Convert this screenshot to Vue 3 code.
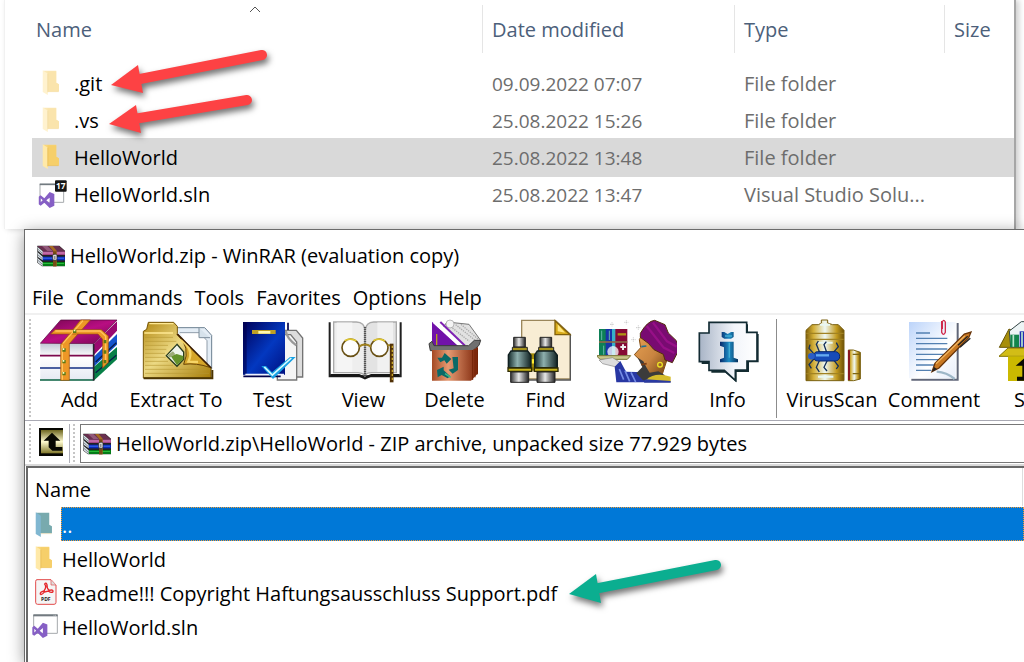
<script setup>
const files = [
  { name: '.git', date: '09.09.2022 07:07', type: 'File folder', icon: 'hidden' },
  { name: '.vs', date: '25.08.2022 15:26', type: 'File folder', icon: 'hidden' },
  { name: 'HelloWorld', date: '25.08.2022 13:48', type: 'File folder', icon: 'folder', selected: true },
  { name: 'HelloWorld.sln', date: '25.08.2022 13:47', type: 'Visual Studio Solu...', icon: 'sln' },
]
const menus = ['File', 'Commands', 'Tools', 'Favorites', 'Options', 'Help']
const entries = [
  { name: '..', icon: 'up', selected: true },
  { name: 'HelloWorld', icon: 'folder' },
  { name: 'Readme!!! Copyright Haftungsausschluss Support.pdf', icon: 'pdf' },
  { name: 'HelloWorld.sln', icon: 'sln' },
]
const address = 'HelloWorld.zip\\HelloWorld - ZIP archive, unpacked size 77.929 bytes'
</script>

<template>
  <div class="screen">
    <svg width="0" height="0" class="defs" aria-hidden="true">
      <defs>
        <linearGradient id="gold" x1="0" y1="0" x2="1" y2="1"><stop offset="0" stop-color="#b48a14" /><stop offset=".45" stop-color="#ecd983" /><stop offset="1" stop-color="#a67c08" /></linearGradient>
        <linearGradient id="goldH"><stop offset="0" stop-color="#80600a" /><stop offset=".2" stop-color="#d4b038" /><stop offset=".5" stop-color="#eef8f4" /><stop offset=".8" stop-color="#c49c20" /><stop offset="1" stop-color="#6e5206" /></linearGradient>
        <linearGradient id="page" x1="0" y1="0" x2="1" y2="1"><stop offset="0" stop-color="#bcd4fa" /><stop offset=".6" stop-color="#fff" /><stop offset="1" stop-color="#e8eefa" /></linearGradient>
        <linearGradient id="blueBook" x1="0" y1="0" x2="1" y2="1"><stop offset="0" stop-color="#000058" /><stop offset=".55" stop-color="#0338c0" /><stop offset="1" stop-color="#001080" /></linearGradient>
        <linearGradient id="copper"><stop offset="0" stop-color="#a44a24" /><stop offset=".35" stop-color="#e69a72" /><stop offset="1" stop-color="#7c2408" /></linearGradient>
        <linearGradient id="metal"><stop offset="0" stop-color="#333" /><stop offset=".45" stop-color="#e8e8e8" /><stop offset="1" stop-color="#222" /></linearGradient>
        <linearGradient id="tealTube"><stop offset="0" stop-color="#142a2a" /><stop offset=".4" stop-color="#8eb0ae" /><stop offset="1" stop-color="#112222" /></linearGradient>
        <linearGradient id="silver"><stop offset="0" stop-color="#a8b4c6" /><stop offset=".6" stop-color="#f2f5fa" /><stop offset="1" stop-color="#fff" /></linearGradient>
        <linearGradient id="infoBlue"><stop offset="0" stop-color="#06286a" /><stop offset=".5" stop-color="#1e8cc4" /><stop offset="1" stop-color="#06305c" /></linearGradient>
        <linearGradient id="paper" x1="0" y1="0" x2="0" y2="1"><stop offset="0" stop-color="#c4cad6" /><stop offset=".35" stop-color="#fff" /><stop offset="1" stop-color="#e6eaf2" /></linearGradient>
        <linearGradient id="magenta" x1="0" y1="0" x2="1" y2="1"><stop offset="0" stop-color="#74064e" /><stop offset=".5" stop-color="#b80e82" /><stop offset="1" stop-color="#720650" /></linearGradient>
        <linearGradient id="skin" x1="0" y1="0" x2="1" y2="1"><stop offset="0" stop-color="#e6a052" /><stop offset=".5" stop-color="#c88440" /><stop offset="1" stop-color="#5e3608" /></linearGradient>
        <linearGradient id="upGold" x1="0" y1="0" x2="0" y2="1"><stop offset="0" stop-color="#6d6620" /><stop offset=".5" stop-color="#fffbd0" /><stop offset="1" stop-color="#80772a" /></linearGradient>
        <symbol id="books" viewBox="48 58 90 66">
          <path d="M52 60H118L135 75V122H66L52 111Z" fill="#222" />
          <path d="M52 61H117L134 76H68Z" fill="#68304f" /><path d="M66 61H82L98 76H82Z" fill="#92587a" />
          <path d="M67 77H135V88H67Z" fill="#a44685" /><path d="M69 80H134V84H69Z" fill="#cf7db6" />
          <path d="M67 93H135V104H67Z" fill="#0828b8" /><path d="M69 96H132V99H69Z" fill="#3e70f2" />
          <path d="M67 109H135V121H67Z" fill="#047c18" /><path d="M69 112H132V115H69Z" fill="#28bb38" />
          <path d="M52 63L68 77V87L54 76ZM52 79L68 93V104L54 94ZM52 96L68 110V122L54 111Z" fill="#d8e0e6" />
          <path d="M53 70L67 83M53 87L67 99M53 103L67 116" stroke="#5b606b" stroke-width="2" />
          <path d="M87 61H98L110 75V122H100V76Z" fill="#a66b20" /><path d="M99 77H109V122H99Z" fill="#754b14" />
          <rect x="98" y="86" width="13" height="18" rx="4" fill="#ddd" stroke="#222" stroke-width="2" /><rect x="103" y="91" width="3" height="10" fill="#666" />
        </symbol>
        <symbol id="folder" viewBox="0 0 50 74">
          <path d="M3 2H42V38L50 42V64H14L3 60Z" fill="#f9d77c" /><path d="M16 4H42V38L50 42V63H16Z" fill="#f6cf6a" /><path d="M2 1L17 11V74L2 65Z" fill="#ffe9a8" /><path d="M17 11V66" stroke="#e5b74b" stroke-width="2" /><path d="M17 64H49" stroke="#edbd50" stroke-width="2" />
        </symbol>
        <symbol id="vs" viewBox="0 0 50 50">
          <path d="M34 1L48 7V42L34 49L18 33L7 42L1 38V15L7 11L18 20ZM34 18L24 26L34 35ZM7 20V32L13 26Z" fill="#865fc5" fill-rule="evenodd" />
        </symbol>
      </defs>
    </svg>

    <section class="explorer">
      <table class="files">
        <colgroup><col /><col class="c-date" /><col class="c-type" /><col class="c-size" /></colgroup>
        <thead>
          <tr>
            <th class="first">Name<svg class="caret" width="12" height="7" viewBox="0 0 12 7"><path d="M1 6L6 1L11 6" fill="none" stroke="#555" /></svg></th>
            <th>Date modified</th><th>Type</th><th>Size</th>
          </tr>
        </thead>
        <tbody>
          <tr v-for="f in files" :key="f.name" :class="{ selected: f.selected }">
            <td class="first">
              <div class="file">
                <span class="slot">
                  <svg v-if="f.icon === 'sln'" width="29" height="29" viewBox="0 0 87 87">
                    <path d="M6 13H77V67H6Z" fill="#fff" stroke="#a5a9ac" stroke-width="3" /><path d="M5 13H55" stroke="#727a80" stroke-width="5" />
                    <use href="#vs" x="1" y="35" width="50" height="50" />
                    <rect x="51" y="1" width="35" height="34" rx="3" fill="#161616" /><text x="54" y="26" class="badge">17</text>
                  </svg>
                  <svg v-else class="tree" :class="{ faded: f.icon === 'hidden' }" width="17" height="25"><use href="#folder" width="17" height="25" /></svg>
                </span>{{ f.name }}
              </div>
            </td>
            <td class="date">{{ f.date }}</td><td>{{ f.type }}</td><td></td>
          </tr>
        </tbody>
      </table>
    </section>

    <main class="winrar">
      <header class="title"><svg width="30" height="22"><use href="#books" width="30" height="22" /></svg><span>HelloWorld.zip - WinRAR (evaluation copy)</span></header>
      <nav class="menu"><button v-for="m in menus" :key="m" type="button">{{ m }}</button></nav>

      <div class="toolbar">
        <i class="grip"></i>
        <button type="button" class="tool">
          <svg viewBox="51 21 240 192">
            <path d="M212 165L282 105V142L212 206Z" fill="#078047" /><path d="M212 135L282 66V98L212 164Z" fill="#1454cc" /><path d="M212 97L282 28V56L212 130Z" fill="#990a70" />
            <path d="M218 150L280 92M218 182L280 130" stroke="#061c4a" stroke-width="4" />
            <path d="M52 94L113 24H282L213 95Z" fill="url(#magenta)" stroke="#50063b" stroke-width="2" />
            <path d="M52 96H212V130H52ZM52 133H212V167H52ZM52 170H212V204H52Z" fill="url(#paper)" />
            <path d="M51 131H212" stroke="#7c084d" stroke-width="5" /><path d="M51 168H212" stroke="#102c82" stroke-width="5" /><path d="M51 204H212" stroke="#086141" stroke-width="5" />
            <path d="M212 96V206" stroke="#282530" stroke-width="5" />
            <path d="M113 98L173 24H202L139 95V205H113Z" fill="#ed9726" stroke="#9a5209" stroke-width="2" /><path d="M83 66L96 53H235L256 72V151L239 168V82L225 66Z" fill="#ed9726" stroke="#9a5209" stroke-width="2" />
            <path d="M118 98V203M180 26L120 94M97 57H231L248 73V154" fill="none" stroke="#ffc45c" stroke-width="4" />
            <path d="M118 109h10v10h-10zM118 144h10v10h-10zM118 180h10v10h-10zM150 53h10v10h-10zM242 84h8v10h-8zM242 115h8v10h-8zM242 144h8v10h-8z" fill="#5d7814" /><path d="M119 109h5v5h-5zM119 144h5v5h-5zM119 180h5v5h-5zM152 53h5v5h-5z" fill="#ffffc2" />
          </svg>Add
        </button>
        <button type="button" class="tool wide">
          <svg viewBox="339 21 240 192">
            <path d="M452 47H545L566 70V171L520 150L452 75Z" fill="#e4edf5" stroke="#6d8091" stroke-width="3" /><path d="M470 62H530L552 86V155L515 130" fill="#fff" stroke="#909daa" stroke-width="3" /><path d="M528 47V77H561" fill="#d6e2eb" stroke="#7c8d9b" stroke-width="3" />
            <path d="M361 58L371 52L376 31H452L463 43V65L564 169V198H361Z" fill="url(#gold)" stroke="#785706" stroke-width="3" />
            <path d="M366 76H450M366 88H460M366 100H435M366 112H430M366 124H426M366 136H428M366 148H435M366 160H450M366 172H550M366 184H558" stroke="#b69732" stroke-width="3" opacity=".6" />
            <path d="M364 63H450M379 35H451" stroke="#ffe993" stroke-width="4" /><path d="M462 67Q505 105 482 157Q520 152 560 166Z" fill="#d5a52a" stroke="#694405" stroke-width="3" /><path d="M474 84Q515 112 496 149L525 150" fill="none" stroke="#f6d567" stroke-width="7" />
            <path d="M463 66L565 168" stroke="#3a1c03" stroke-width="4" /><path d="M362 199H568V174" fill="none" stroke="#4b3502" stroke-width="6" />
            <path d="M462 97L430 131L462 163L482 142V120Z" fill="#eff4ec" stroke="#273b1e" stroke-width="4" /><path d="M443 132L461 126L481 132V142L462 160Z" fill="#64922b" /><path d="M433 130L450 118L457 127L440 137Z" fill="#9cab78" />
          </svg>Extract To
        </button>
        <button type="button" class="tool">
          <svg viewBox="27 21 240 192">
            <path d="M182 55H217L236 78V195H182Z" fill="#ddd" stroke="#737373" stroke-width="4" /><path d="M180 68H200L218 90V204H160V180Z" fill="#f5f5f5" stroke="#777" stroke-width="4" /><path d="M185 56Q188 79 217 100" fill="none" stroke="#999" stroke-width="7" />
            <path d="M57 30H183V188H57Z" fill="url(#blueBook)" /><path d="M57 30H68V188H57Z" fill="#00004e" opacity=".6" /><path d="M64 188H180" stroke="#eef1ff" stroke-width="5" /><path d="M58 193H170M192 32V54" stroke="#00004b" stroke-width="5" />
            <path d="M84 54H155V66H84Z" fill="#bea025" /><path d="M103 61H139" stroke="#fff9b0" stroke-width="8" />
            <path d="M112 162H126L144 181L198 135H215L147 201Z" fill="#17a1e3" /><path d="M121 165L145 189L202 138" fill="none" stroke="#d9faff" stroke-width="5" />
          </svg>Test
        </button>
        <button type="button" class="tool">
          <svg viewBox="300 21 240 192">
            <path d="M317 31V193H530V31" fill="#fff" stroke="#202020" stroke-width="6" /><path d="M319 190H405L423 198L442 190H527" fill="none" stroke="#161616" stroke-width="8" />
            <path d="M329 30H397Q422 31 423 55V190Q413 180 397 182H329Z" fill="#eee" stroke="#aaa" stroke-width="4" /><path d="M517 30H449Q426 31 423 55V190Q430 180 449 182H517Z" fill="#e3e3e3" stroke="#aaa" stroke-width="4" />
            <path d="M338 31H385V180H338ZM460 31H507V180H460Z" fill="#fafafa" opacity=".6" /><path d="M423 45V193" stroke="#555" stroke-width="7" stroke-dasharray="4 2" />
            <circle cx="380" cy="107" r="26" fill="#fff" fill-opacity=".85" stroke="#695116" stroke-width="5" /><circle cx="466" cy="107" r="26" fill="#fff" fill-opacity=".85" stroke="#695116" stroke-width="5" />
            <path d="M362 86Q380 76 397 87M448 86Q466 76 483 87" fill="none" stroke="#dec630" stroke-width="5" /><path d="M405 104Q423 91 441 104M490 100H504" fill="none" stroke="#a28320" stroke-width="6" /><path d="M503 95V211" stroke="#503006" stroke-width="11" /><path d="M505 101V205" stroke="#c7a525" stroke-width="4" stroke-dasharray="7 5" />
          </svg>View
        </button>
        <button type="button" class="tool">
          <svg viewBox="15 21 240 192">
            <path d="M94 54L111 30L177 37L211 84L196 104H131Z" fill="#e2e2e2" stroke="#777" stroke-width="3" /><path d="M122 44L178 88M137 38L193 83M153 37L204 81" stroke="#aaa" stroke-width="4" stroke-dasharray="4 3" /><circle cx="120" cy="36" r="12" fill="#f4f4f4" stroke="#999" stroke-width="2" />
            <path d="M66 29L145 102H66Z" fill="#7112a9" /><path d="M82 28L165 102H145L69 33Z" fill="#fff" /><path d="M91 30L165 101" stroke="#7e21b3" stroke-width="6" /><path d="M80 66V104" stroke="#b7a01c" stroke-width="4" />
            <path d="M57 95L66 88L72 101H176L193 85H212L207 100L188 116H61Z" fill="#707070" stroke="#3c3c3c" stroke-width="3" />
            <path d="M66 114H188L204 105V184L183 206H66Z" fill="url(#copper)" /><path d="M188 114V204M195 111V196M202 107V187" stroke="#722306" stroke-width="3" />
            <path d="M82 137H96L104 123L124 141L110 155L103 145L91 151ZM127 135H144V174L128 185L116 173L131 169ZM81 174L101 164V175L121 193L113 199L95 189L83 196Z" fill="#0b6967" /><path d="M105 185L122 196" stroke="#39b988" stroke-width="5" />
          </svg>Delete
        </button>
        <button type="button" class="tool">
          <svg viewBox="285 21 240 192">
            <path d="M332 25H433L478 67V201H332Z" fill="#f8edd4" stroke="#9b875b" stroke-width="4" /><path d="M478 66V204H345" fill="none" stroke="#555" stroke-width="4" /><path d="M432 26V68H477Z" fill="#d7aa19" stroke="#81600a" stroke-width="4" /><path d="M440 37V58L462 62Z" fill="#ffe780" />
            <path d="M357 124H379V176H357Z" fill="#9f8808" /><path d="M361 148H375" stroke="#ffee35" stroke-width="13" />
            <g id="barrel"><path d="M308 76H343V105H308Z" fill="url(#metal)" stroke="#222" stroke-width="3" /><path d="M304 106H349V118H304Z" fill="#a7931a" stroke="#222" stroke-width="3" /><path d="M300 117H350L360 130V167H292V129Z" fill="url(#tealTube)" stroke="#101f20" stroke-width="4" /><path d="M291 168H362V178H291Z" fill="#c7b41c" stroke="#302c04" stroke-width="4" /><path d="M299 180H353V211H299Z" fill="url(#metal)" stroke="#222" stroke-width="3" /></g>
            <use href="#barrel" x="79" />
          </svg>Find
        </button>
        <button type="button" class="tool">
          <svg viewBox="33 21 240 192">
            <path d="M39 51H63V131H39Z" fill="#0d8056" /><path d="M59 51H81V130H59Z" fill="#1835a8" /><path d="M78 51H91V130H78Z" fill="#37b1ca" /><path d="M88 51H124V130H88Z" fill="#850b35" /><path d="M39 90H124" stroke="#8d6848" stroke-width="5" /><path d="M95 67H120" stroke="#ad9514" stroke-width="7" /><path d="M47 56V84M70 56V84M53 101V128" stroke="#64b7ab" stroke-width="3" /><circle cx="81" cy="119" r="17" fill="#fff" opacity=".75" /><path d="M103 105H120M111 97V114" stroke="#eee" stroke-width="6" />
            <path d="M31 131H134L124 142H42Z" fill="#c8c78a" stroke="#74702f" stroke-width="3" /><path d="M39 144L80 137L102 151L91 165L50 155Z" fill="#ddd" stroke="#888" stroke-width="2" />
            <path d="M86 164L103 147L120 179L184 181L178 211H91Z" fill="#2837a3" /><path d="M100 171L113 203M117 176L131 208M135 181L149 210" stroke="#748be4" stroke-width="5" />
            <path d="M166 72L245 137L225 199L183 208L169 151L145 128L164 107L160 83Z" fill="url(#skin)" stroke="#834e14" stroke-width="3" /><path d="M166 104L181 102" stroke="#207094" stroke-width="5" />
            <path d="M163 64Q184 27 206 25L237 38L247 63L271 86L281 109L259 152L237 144L232 127L204 113L187 94L163 76Z" fill="#790b71" stroke="#54300d" stroke-width="3" /><path d="M182 42L233 107L265 123M201 32L243 88L272 104" fill="none" stroke="#970f87" stroke-width="7" />
            <path d="M155 137L172 148L181 166L191 182L217 178L237 190L220 203L171 205L151 184L169 165Z" fill="#3b3b3b" /><path d="M165 158L182 155" stroke="#7c3f16" stroke-width="5" /><circle cx="222" cy="158" r="7" fill="none" stroke="#ede324" stroke-width="4" /><path d="M181 203Q207 179 254 194V211H178Z" fill="#d5bc2a" /><path d="M179 202L254 207V212H174Z" fill="#2939a2" />
            <path d="M72 37h12m-6-6v12M115 31h12m-6-6v12M150 47h14m-7-7v14M136 83h13m-7-7v14" stroke="#c9c9c9" stroke-width="3" stroke-dasharray="3 2" />
          </svg>Wizard
        </button>
        <button type="button" class="tool">
          <svg viewBox="306 21 240 192">
            <path d="M376 37H486V66H518V151H489V180H452V211L418 182H376V156H347V70H376Z" fill="#142c31" /><path d="M369 31H482V61H513V147H483V174H448V205L415 175H369V149H340V63H369Z" fill="url(#silver)" stroke="#122b33" stroke-width="5" />
            <path d="M407 60H415L425 66L435 60H443V75L435 80H415L407 75ZM402 89H443V137L456 142V151H402V142L414 137V106L402 101Z" fill="url(#infoBlue)" /><path d="M430 92V137M417 72H438" stroke="#42add3" stroke-width="4" />
          </svg>Info
        </button>
        <i class="separator"></i>
        <button type="button" class="tool wide">
          <svg viewBox="66 21 240 192">
            <path d="M154 33V24H173V33L188 38H205L222 55V206H108V55L126 38H145Z" fill="url(#goldH)" stroke="#7a6010" stroke-width="3" /><path d="M109 64H221M109 82H221M109 185H221" stroke="#a18222" stroke-width="4" /><path d="M150 38H180M142 92H188M144 194H190" stroke="#e9f8f3" stroke-width="6" />
            <path d="M131 125L117 109L120 98M150 124L139 97L145 87M171 124L162 98L169 89M188 124L205 104L199 92M131 141L117 158L124 169M150 142L139 166L148 180M174 141L162 166L171 177M190 142L205 162L199 171" fill="none" stroke="#153058" stroke-width="4" />
            <rect x="130" y="119" width="79" height="28" rx="13" fill="#174bb7" stroke="#08266b" stroke-width="3" /><circle cx="124" cy="133" r="10" fill="#2a5dc7" /><path d="M138 130H177" stroke="#65aaf0" stroke-width="7" />
            <path d="M235 114H250L271 121V201L251 206H235Z" fill="url(#goldH)" stroke="#79600d" stroke-width="3" /><path d="M237 115V204" stroke="#8a1621" stroke-width="6" /><path d="M248 127H270M248 185H270" stroke="#7d6511" stroke-width="4" />
          </svg>VirusScan
        </button>
        <button type="button" class="tool wide">
          <svg viewBox="372 21 240 192">
            <path d="M424 203H563V33" fill="none" stroke="#616779" stroke-width="6" /><path d="M417 30H557V199H417Z" fill="url(#page)" />
            <path d="M438 63H480M438 79H532M438 95H532M438 111H532M438 127H525M438 143H510M438 159H496M438 175H484" stroke="#5380b1" stroke-width="4" />
            <path d="M515 27V61Q521 73 526 61V30Q520 20 517 31V51" fill="none" stroke="#cf294c" stroke-width="4" /><path d="M500 179Q530 181 554 201" fill="none" stroke="#9eb7c7" stroke-width="7" />
            <path d="M486 179L495 154L583 66L603 60L596 77L507 168Z" fill="#c87822" stroke="#683409" stroke-width="4" /><path d="M498 155L584 72" stroke="#f2b45c" stroke-width="4" /><path d="M486 179L492 165L501 171Z" fill="#222" /><path d="M570 106L601 79M564 100L593 73" stroke="#222" stroke-width="4" />
          </svg>Comment
        </button>
        <button type="button" class="tool">
          <svg viewBox="660 21 240 192">
            <path d="M685 106L714 51L750 70H820L865 106Z" fill="#a78e0b" stroke="#695607" stroke-width="3" /><path d="M715 57L751 29H820V106H719Z" fill="#edf4f5" stroke="#344" stroke-width="3" /><path d="M718 68H744V105H718Z" fill="#13854c" /><path d="M746 58H770V105H746Z" fill="#202baf" /><path d="M727 69V104M753 60V104" stroke="#b8e6cc" stroke-width="5" />
            <path d="M684 133L711 108H840L865 133Z" fill="#d2bd17" stroke="#837306" stroke-width="3" /><path d="M711 133H840V207H711Z" fill="#cbb900" /><path d="M734 161L763 136L792 161H781V206H738V194H754V161Z" fill="#090a03" />
          </svg>SFX
        </button>
      </div>

      <div class="location">
        <i class="grip"></i>
        <button type="button" class="up" aria-label="Up one level">
          <svg width="24" height="28" viewBox="0 0 72 84"><path d="M0 0H72V84H0Z" fill="#070702" /><path d="M6 6H72V76H6Z" fill="url(#upGold)" /><path d="M39 14L64 38H50V57H70V68H40L29 58V38H14Z" fill="#080802" /></svg>
        </button>
        <i class="grip second"></i>
        <label class="address"><svg width="30" height="22"><use href="#books" width="30" height="22" /></svg><input :value="address" readonly aria-label="Archive path" /></label>
      </div>

      <div class="list">
        <table class="entries">
          <colgroup><col class="c-pic" /><col /></colgroup>
          <thead><tr><th colspan="2">Name</th></tr></thead>
          <tbody>
            <tr v-for="e in entries" :key="e.name" :class="{ current: e.selected }">
              <td class="pic">
                <svg v-if="e.icon === 'pdf'" width="22" height="26" viewBox="0 0 66 78">
                  <path d="M6 2H48L63 18V70Q63 76 57 76H8Q2 76 2 70V7Q2 2 6 2Z" fill="#f5f5f5" stroke="#e24b4b" stroke-width="3" /><path d="M48 3V18H63" fill="#ddd" stroke="#e24b4b" stroke-width="2" />
                  <path d="M16 46Q14 39 27 36Q36 23 29 15Q33 9 36 17Q35 29 43 34Q55 31 54 38Q49 43 40 36L28 39Q22 48 16 46" fill="none" stroke="#e5252a" stroke-width="4" /><text x="18" y="66" class="pdf">PDF</text>
                </svg>
                <svg v-else-if="e.icon === 'sln'" class="sln" width="26" height="25" viewBox="0 0 78 75"><path d="M5 3H76V58H5Z" fill="#fff" stroke="#a5a9ac" stroke-width="3" /><path d="M4 4H77" stroke="#727a80" stroke-width="6" /><path d="M65 4H73" stroke="#fff" stroke-width="2" stroke-dasharray="2 2" /><use href="#vs" y="25" width="48" height="48" /></svg>
                <svg v-else-if="e.icon === 'up'" width="17" height="25" viewBox="0 0 50 74"><path d="M3 2H42V38L50 42V63H14L3 60Z" fill="#78aaae" /><path d="M2 1L17 11V74L2 65Z" fill="#80b7d1" /><path d="M17 64H49" stroke="#ead7ae" stroke-width="2" /></svg>
                <svg v-else width="17" height="25"><use href="#folder" width="17" height="25" /></svg>
              </td>
              <td class="entry">{{ e.name }}</td>
            </tr>
          </tbody>
        </table>
      </div>
    </main>

    <svg class="arrows" width="740" height="620" viewBox="0 0 740 620" aria-hidden="true">
      <g fill="#fd4244" stroke="#fd4244"><path d="M135 80L262 55" stroke-width="10" stroke-linecap="round" /><path d="M111 85L138 65L143 93Z" stroke="none" /></g>
      <g fill="#fd4244" stroke="#fd4244"><path d="M134 119L247 100" stroke-width="10" stroke-linecap="round" /><path d="M109 124L136 105L141 133Z" stroke="none" /></g>
      <g fill="#0bae90" stroke="#0bae90"><path d="M594 589L716 565" stroke-width="10" stroke-linecap="round" /><path d="M569 594L596 574L601 603Z" stroke="none" /></g>
    </svg>
  </div>
</template>

<style>
body { margin: 0; background: #fff; }
</style>

<style scoped>
* { box-sizing: border-box; }
.screen { position: relative; display: flex; flex-direction: column; min-height: 100vh; overflow: hidden; font: 20px/24px "Open Sans", "Noto Sans", sans-serif; color: #000; }
.defs { position: absolute; }
button, input { font: inherit; color: inherit; background: none; border: 0; padding: 0; margin: 0; }
table { width: 100%; border-collapse: collapse; table-layout: fixed; }
th { font-weight: 400; text-align: left; }
td, th { padding: 0; white-space: nowrap; }
svg { display: block; flex: none; }

.explorer { margin: 0 8px 0 4px; padding: 5px 0 15px 27px; border-left: 1px solid #f1f1f1; border-right: 2px solid #a6a6a6; box-shadow: 3px 0 6px rgba(0, 0, 0, .2); }
.files { color: #6d6d6d; }
.c-date { width: 252px; }
.c-type { width: 210px; }
.c-size { width: 70px; }
.files thead tr { height: 61px; color: #4c607a; }
.files th { padding: 13px 0 24px 10px; background: linear-gradient(#e5e5e5, #e5e5e5) no-repeat left top / 1px 48px; }
.files th.first { position: relative; padding-left: 4px; background: none; }
.caret { position: absolute; top: 1px; left: 217px; }
.files tbody tr { height: 37px; }
.files td { padding: 0 0 2px 10px; }
.files td.date { font-size: 19px; }
.files td.first { padding: 0 0 0 6px; color: #000; }
.files .selected { background: #d9d9d9; box-shadow: 0 -2px #d9d9d9; }
.file { display: flex; align-items: center; height: 37px; padding-bottom: 2px; }
.slot { display: flex; width: 36px; }
.slot .tree { margin: 0 0 2px 4px; }
.slot .faded { opacity: .55; }
.badge { font: bold 25px "Open Sans", sans-serif; fill: #fff; }
.pdf { font: bold 15px "Open Sans", sans-serif; fill: #222; }

.winrar { position: relative; flex: 1; display: flex; flex-direction: column; margin-left: 24px; border: solid #6b6b6b; border-width: 1px 0 0 1px; background: #fff; box-shadow: 0 3px 15px rgba(0, 0, 0, .4); }
.title { display: flex; align-items: center; gap: 4px; height: 54px; padding: 0 0 2px 11px; }
.menu { display: flex; gap: 12px; height: 31px; padding: 0 0 2px 7px; border-bottom: 2px solid #f0f0f0; }
.toolbar { display: flex; height: 106px; overflow: hidden; padding: 4px 0 2px 4px; border-bottom: 1px solid #a9a9b3; }
.grip { flex: none; width: 2px; background: repeating-linear-gradient(#c5c5c5 0 2px, transparent 2px 4px); }
.toolbar .grip { margin-right: 3px; }
.tool { flex: none; display: flex; flex-direction: column; align-items: center; gap: 5px; width: 91px; }
.tool.wide { width: 102px; }
.tool svg { width: 80px; height: 64px; }
.separator { flex: none; width: 1px; margin: 0 4px 0 3px; background: #8c8c8c; }
.location { display: flex; height: 45px; padding: 3px 0 1px 4px; border-bottom: 2px solid #dadada; }
.up { width: 39px; padding-left: 8px; border-right: 1px solid #aeaeb8; }
.up svg { margin-top: -4px; }
.second { margin: 0 5px 0 3px; }
.address { flex: 1; display: flex; align-items: center; gap: 4px; padding-left: 1px; border: 1px solid #777; border-right: 0; }
.address input { flex: 1; min-width: 0; height: 30px; outline: 0; }
.list { flex: 1; margin-left: 1px; border: solid #686868; border-width: 2px 0 0 2px; }
.c-pic { width: 33px; }
.entries th { height: 39px; padding: 4px 0 0 7px; background: linear-gradient(#ddd, #ddd) no-repeat right 1px top / 1px 38px; }
.entries tbody tr { height: 34px; }
.pic { padding-left: 7px; }
.pic .sln { margin-left: -3px; }
.entry { padding: 3px 0 0 1px; }
.current .entry { background: #0078d7; color: #fff; outline: 1px dotted #f49a35; outline-offset: -1px; }
.arrows { position: absolute; top: 0; left: 0; pointer-events: none; filter: drop-shadow(2px 4px 3px rgba(0, 0, 0, .55)); }
</style>
